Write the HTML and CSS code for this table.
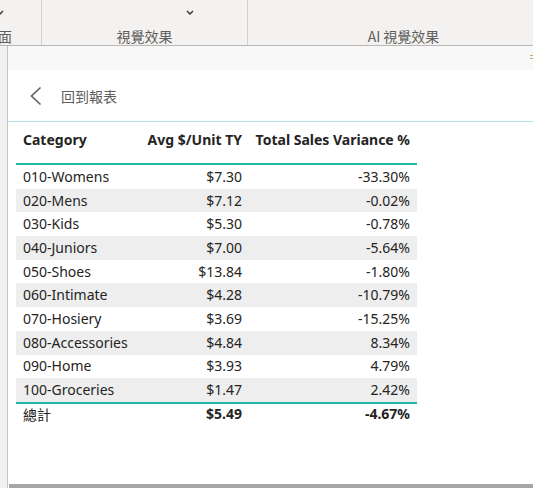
FILE: index.html
```html
<!DOCTYPE html>
<html>
<head>
<meta charset="utf-8">
<link rel="stylesheet" href="styles.css">
</head>
<body>
<div class="ribbon">
  <div class="group g1">
    <span class="chev cut">
      <svg width="8" height="5" viewBox="0 0 8 5"><path d="M1 1 L4 4 L7 1" fill="none" stroke="#323130" stroke-width="1.4"/></svg>
    </span>
    <span class="glabel">頁面</span>
  </div>
  <div class="group g2">
    <span class="chev">
      <svg width="8" height="5" viewBox="0 0 8 5"><path d="M1 1 L4 4 L7 1" fill="none" stroke="#323130" stroke-width="1.4"/></svg>
    </span>
    <span class="glabel">視覺效果</span>
  </div>
  <div class="group g3">
    <span class="chev hidden"></span>
    <span class="glabel">AI 視覺效果</span>
  </div>
</div>
<div class="main">
  <div class="leftstrip"></div>
  <div class="panel">
    <div class="topbar"><span class="mark"></span></div>
    <div class="backrow">
      <svg class="backicon" width="14" height="20" viewBox="0 0 14 20"><path d="M11.5 1.5 L2.5 10 L11.5 18.5" fill="none" stroke="#605e5c" stroke-width="1.6"/></svg>
      <span class="backtext">回到報表</span>
    </div>
    <div class="tablewrap">
      <div class="table">
        <div class="row head">
          <div class="c1">Category</div><div class="c2">Avg $/Unit TY</div><div class="c3">Total Sales Variance %</div>
        </div>
        <div class="row"><div class="c1">010-Womens</div><div class="c2">$7.30</div><div class="c3">-33.30%</div></div>
        <div class="row alt"><div class="c1">020-Mens</div><div class="c2">$7.12</div><div class="c3">-0.02%</div></div>
        <div class="row"><div class="c1">030-Kids</div><div class="c2">$5.30</div><div class="c3">-0.78%</div></div>
        <div class="row alt"><div class="c1">040-Juniors</div><div class="c2">$7.00</div><div class="c3">-5.64%</div></div>
        <div class="row"><div class="c1">050-Shoes</div><div class="c2">$13.84</div><div class="c3">-1.80%</div></div>
        <div class="row alt"><div class="c1">060-Intimate</div><div class="c2">$4.28</div><div class="c3">-10.79%</div></div>
        <div class="row"><div class="c1">070-Hosiery</div><div class="c2">$3.69</div><div class="c3">-15.25%</div></div>
        <div class="row alt"><div class="c1">080-Accessories</div><div class="c2">$4.84</div><div class="c3">8.34%</div></div>
        <div class="row"><div class="c1">090-Home</div><div class="c2">$3.93</div><div class="c3">4.79%</div></div>
        <div class="row alt"><div class="c1">100-Groceries</div><div class="c2">$1.47</div><div class="c3">2.42%</div></div>
        <div class="row total"><div class="c1">總計</div><div class="c2">$5.49</div><div class="c3">-4.67%</div></div>
      </div>
    </div>
    <div class="bottombar"></div>
  </div>
</div>
</body>
</html>
```
FILE: styles.css
```css
* { box-sizing: border-box; }
html, body { margin: 0; padding: 0; }
body {
  width: 533px;
  height: 488px;
  overflow: hidden;
  background: #ffffff;
  font-family: "Noto Sans", "Noto Sans CJK TC", sans-serif;
  color: #252423;
  display: flex;
  flex-direction: column;
}
.ribbon {
  height: 46px;
  flex: none;
  display: flex;
  background: #f3f2f1;
  border-bottom: 1px solid #b9b8b7;
  overflow: hidden;
}
.group {
  display: flex;
  flex-direction: column;
  align-items: center;
  justify-content: space-between;
  padding: 6px 0 0;
  border-right: 1px solid #d2d0ce;
  height: 45px;
}
.g1 { width: 42px; align-items: flex-start; }
.g2 { width: 206px; }
.g3 { flex: 1; border-right: none; }
.g1 .glabel { margin-left: -16px; }
.chev { height: 12px; display: flex; align-items: center; }
.chev.cut { margin-left: -4px; }
.g2 .chev { margin-left: 90px; }
.glabel {
  font-family: "Noto Sans CJK TC", sans-serif;
  font-size: 14px;
  line-height: 18px;
  color: #605e5c;
  white-space: nowrap;
}
.g3 .glabel { margin-left: 26px; }
.main {
  flex: 1;
  display: flex;
  min-height: 0;
}
.leftstrip {
  width: 8px;
  flex: none;
  background: #f1f1f1;
  border-right: 1px solid #c6c6c6;
}
.panel {
  flex: 1;
  display: flex;
  flex-direction: column;
  min-width: 0;
}
.topbar {
  height: 24px;
  flex: none;
  background: #f8f8f8;
  display: flex;
  justify-content: flex-end;
  align-items: center;
}
.mark {
  width: 3px;
  height: 4px;
  border-top: 1px solid #d9a46a;
  border-bottom: 1px solid #d9a46a;
  margin-bottom: 2px;
}
.backrow {
  height: 52px;
  flex: none;
  display: flex;
  align-items: center;
  border-bottom: 1px solid #b4e4ee;
  padding-left: 21px;
  padding-top: 1px;
}
.backicon { flex: none; }
.backtext {
  margin-left: 18px;
  font-family: "Noto Sans CJK TC", sans-serif;
  font-size: 14px;
  color: #605e5c;
}
.tablewrap {
  flex: 1;
  padding-left: 8px;
}
.table {
  width: 401px;
  font-size: 14px;
}
.row {
  display: grid;
  grid-template-columns: 120px 113px 168px;
  height: 23.7px;
  align-items: center;
  line-height: 18px;
}
.row > div { white-space: nowrap; }
.c1 { padding-left: 7px; }
.c2, .c3 { text-align: right; padding-right: 7px; }
.row.alt { background: #eeeeee; }
.row.head {
  height: 43px;
  font-weight: 700;
  border-bottom: 2px solid #1cb9ab;
  align-items: start;
  padding-top: 9px;
}
.row.total {
  border-top: 2px solid #1cb9ab;
  font-weight: 700;
  height: 24px;
  padding-bottom: 1px;
}
.row.total .c1 {
  font-family: "Noto Sans CJK TC", sans-serif;
  font-weight: 400;
}
.bottombar {
  height: 4px;
  flex: none;
  background: #a6a6a6;
  margin-left: 1px;
  margin-top: auto;
}
```
